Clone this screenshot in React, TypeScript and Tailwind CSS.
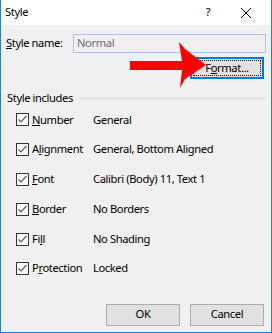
import React from "react";

const rows = [
  { pre: "", u: "N", post: "umber", value: "General" },
  { pre: "A", u: "l", post: "ignment", value: "General, Bottom Aligned" },
  { pre: "", u: "F", post: "ont", value: "Calibri (Body) 11, Text 1" },
  { pre: "", u: "B", post: "order", value: "No Borders" },
  { pre: "Fi", u: "l", post: "l", value: "No Shading" },
  { pre: "P", u: "r", post: "otection", value: "Locked" },
];

const Check = () => (
  <div className="w-[13px] h-[13px] border border-[#333333] bg-white flex items-center justify-center">
    <svg width="11" height="11" viewBox="0 0 11 11">
      <path d="M1.5 5.5 L4 8 L9.5 2" fill="none" stroke="#5a5a5a" strokeWidth="1.2" />
    </svg>
  </div>
);

export default function App() {
  return (
    <div
      className="relative w-[272px] h-[333px] bg-[#f0f0f0] border-l border-r border-b border-[#1883d7] text-[11.2px] tracking-[-0.4px] text-black overflow-hidden"
      style={{ fontFamily: '"Noto Sans", "Liberation Sans", sans-serif' }}
    >
      {/* title bar */}
      <div className="h-[25px] bg-white flex items-center">
        <span className="pl-[4px]">Style</span>
        <span className="ml-auto w-[16px] text-center mr-[24px]">?</span>
        <svg width="12" height="12" viewBox="0 0 12 12" className="mr-[19px]">
          <path d="M1 1 L11 11 M11 1 L1 11" stroke="#000" strokeWidth="1" />
        </svg>
      </div>

      {/* style name */}
      <div className="flex items-center mt-[9px] pl-[5px] pr-[5px]">
        <span>
          <span className="underline">S</span>tyle name:
        </span>
        <div className="ml-auto w-[193px] h-[19px] border border-[#a9c4e6] bg-[#f0f0f0] flex items-center pl-[3px] text-[#6d6d6d]">
          Normal
        </div>
      </div>

      {/* format button */}
      <div className="flex justify-end pr-[7px] mt-[4px]">
        <div className="w-[74px] h-[22px] border-2 border-[#0078d7] bg-[#e1e1e1] p-[1px]">
          <div className="w-full h-full border border-dotted border-black flex items-center justify-center">
            <span>
              F<span className="underline">o</span>rmat...
            </span>
          </div>
        </div>
      </div>

      {/* style includes */}
      <div className="flex items-center mt-[12px] pl-[6px] pr-[5px] h-[14px]">
        <span>Style includes</span>
        <div className="flex-1 ml-[6px] h-px bg-[#dcdcdc]" />
      </div>

      <div className="flex flex-col">
        {rows.map((r) => (
          <div key={r.value} className="h-[29.8px] flex items-center pl-[15px]">
            <Check />
            <span className="ml-[3px] w-[61px]">
              {r.pre}
              <span className="underline">{r.u}</span>
              {r.post}
            </span>
            <span>{r.value}</span>
          </div>
        ))}
      </div>

      {/* buttons */}
      <div className="flex justify-end gap-[10px] pr-[7px] mt-[20px]">
        <div className="w-[74px] h-[22px] border border-[#adadad] bg-[#e1e1e1] flex items-center justify-center">
          OK
        </div>
        <div className="w-[74px] h-[22px] border border-[#adadad] bg-[#e1e1e1] flex items-center justify-center">
          Cancel
        </div>
      </div>

      {/* red arrow */}
      <svg
        className="absolute left-[128px] top-[41px]"
        width="80"
        height="50"
        viewBox="0 0 80 50"
      >
        <path
          d="M1 20 L53 20 L50 1 L56 8 L77 24 L56 38 L51 47 L53 29 L1 29 Z"
          fill="#ff0000"
        />
      </svg>
    </div>
  );
}
